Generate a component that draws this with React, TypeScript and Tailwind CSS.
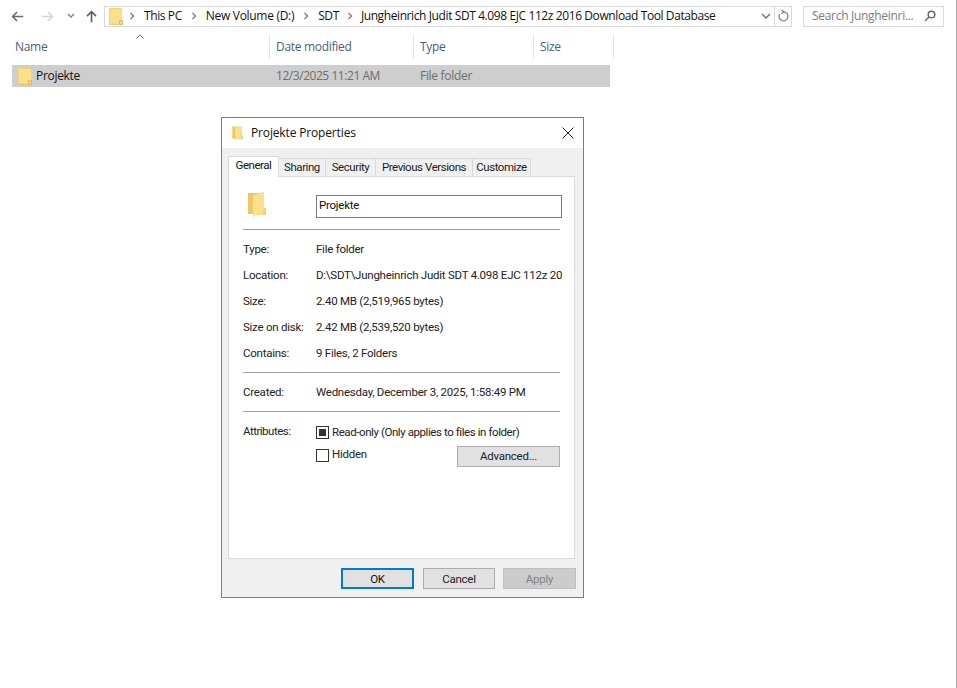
import React from "react";

function Folder({ w, h }: { w: number; h: number }) {
  return (
    <svg className="shrink-0" width={w} height={h} viewBox="0 0 14 17">
      <rect x="0" y="0" width="13" height="16.5" fill="#fbe08c" />
      <rect x="0" y="0" width="13" height="1" fill="#f5d272" />
      <rect x="0" y="0" width="0.8" height="16.5" fill="#f3cf76" />
      <path d="M10.5 16.5 V12.5 H13.5 V16.5 Z" fill="#f7d67a" stroke="#dca93c" strokeWidth="0.7" />
      <rect x="0" y="15.8" width="13" height="0.8" fill="#e7bd58" />
    </svg>
  );
}

function BigFolder({ w, h }: { w: number; h: number }) {
  return (
    <svg className="shrink-0" width={w} height={h} viewBox="0 0 18 26">
      <path d="M0 1 H16 V22 H0 Z" fill="#edc868" />
      <path d="M5 3 L16 0 V16 H18 V23 H7 L5 26 Z" fill="#fbdf8b" />
      <path d="M16 16 H18 V23 H14 Z" fill="#f5d274" />
    </svg>
  );
}

function Arrow({ d, color }: { d: string; color: string }) {
  return (
    <svg className="shrink-0" width="13" height="13" viewBox="0 0 16 16" fill="none" stroke={color} strokeWidth="2">
      <path d={d} />
    </svg>
  );
}

function Chevron({ color = "#7a7a7a" }: { color?: string }) {
  return (
    <svg className="shrink-0" width="6" height="8" viewBox="0 0 6 8" fill="none" stroke={color} strokeWidth="1.3">
      <path d="M1.5 1 L4.5 4 L1.5 7" />
    </svg>
  );
}

function Crumb({ label }: { label: string }) {
  return <span className="whitespace-nowrap">{label}</span>;
}

function Hr() {
  return <div className="h-px bg-[#a0a0a0] w-[317px]" />;
}

function Row({ k, v }: { k: string; v: string }) {
  return (
    <div className="flex items-center h-[26px]">
      <span className="w-[73px] shrink-0">{k}</span>
      <span className="whitespace-nowrap">{v}</span>
    </div>
  );
}

function Tab({ label, w, active }: { label: string; w: string; active?: boolean }) {
  return active ? (
    <div className={`${w} h-[21px] -mb-px relative z-10 bg-white border border-b-0 border-[#d9d9d9] flex items-start justify-center text-[#111] tracking-[-0.45px]`}>
      {label}
    </div>
  ) : (
    <div className={`${w} h-[18px] bg-[#f0f0f0] border border-b-0 border-l-0 border-[#d9d9d9] flex items-center justify-center pb-[2px] text-[#222] tracking-[-0.45px]`}>
      {label}
    </div>
  );
}

export default function App() {
  return (
    <div className="relative w-[957px] h-[688px] bg-white border-r border-[#a6a6a6] overflow-hidden text-[12px] leading-[16px] tracking-[-0.3px] text-[#1a1a1a] flex flex-col font-['Open_Sans','Noto_Sans',sans-serif]">
      {/* Toolbar */}
      <div className="flex items-center h-[22px] mt-[5px]">
        <div className="flex items-center w-[104px] pl-[11px]">
          <Arrow d="M15 8 H2 M7.5 2.5 L2 8 L7.5 13.5" color="#6b6b6b" />
          <div className="ml-[17px]">
            <Arrow d="M1 8 H14 M8.5 2.5 L14 8 L8.5 13.5" color="#d6d6d6" />
          </div>
          <svg className="ml-[13px] shrink-0" width="8" height="6" viewBox="0 0 8 6" fill="none" stroke="#7a7a7a" strokeWidth="1.3">
            <path d="M1 1 L4 4 L7 1" />
          </svg>
          <div className="ml-[10px]">
            <Arrow d="M8 15 V2 M2.5 7.5 L8 2 L13.5 7.5" color="#5f5f5f" />
          </div>
        </div>
        <div className="flex items-center w-[671px] h-[21px] border border-[#d9d9d9] pl-[4px] tracking-[-0.4px] text-[#111]">
          <Folder w={14} h={17} />
          <div className="ml-[6px] mr-[9px]"><Chevron /></div>
          <Crumb label="This PC" />
          <div className="mx-[9px]"><Chevron /></div>
          <span className="whitespace-nowrap tracking-[-0.3px]">New Volume (D:)</span>
          <div className="mx-[9px]"><Chevron /></div>
          <Crumb label="SDT" />
          <div className="mx-[8px]"><Chevron /></div>
          <Crumb label="Jungheinrich Judit SDT 4.098 EJC 112z 2016 Download Tool Database" />
          <svg className="ml-auto mr-[3px] shrink-0" width="10" height="7" viewBox="0 0 10 7" fill="none" stroke="#6f6f6f" strokeWidth="1.4">
            <path d="M1 1 L5 5 L9 1" />
          </svg>
        </div>
        <div className="flex items-center justify-center w-[17px] h-[21px] border border-l-0 border-[#d9d9d9]">
          <svg width="12" height="14" viewBox="0 0 12 14" fill="none" stroke="#7d7d7d" strokeWidth="1.2">
            <path d="M6.5 2.8 A4.5 4.5 0 1 1 2.6 5" />
            <path d="M4.5 0.8 L6.8 2.8 L4.5 4.8" />
          </svg>
        </div>
        <div className="ml-[11px] flex items-center w-[141px] h-[21px] border border-[#d9d9d9] pl-[8px] pr-[7px] text-[#7b7b7b]">
          <span className="whitespace-nowrap">Search Jungheinri...</span>
          <svg className="ml-auto" width="12" height="12" viewBox="0 0 12 12" fill="none" stroke="#6a6a6a" strokeWidth="1.5">
            <circle cx="7.5" cy="4.5" r="3.3" />
            <path d="M5 7 L1 11" />
          </svg>
        </div>
      </div>

      {/* Column header */}
      <div className="relative flex h-[25px] mt-[7px] items-center text-[#4c607a]">
        <svg className="absolute left-[136px] top-[0px]" width="8" height="5" viewBox="0 0 8 5" fill="none" stroke="#707070" strokeWidth="1">
          <path d="M0.5 4.5 L4 1 L7.5 4.5" />
        </svg>
        <div className="w-[270px] h-full pl-[15px] flex items-center border-r border-[#e5e5e5]">Name</div>
        <div className="w-[144px] h-full pl-[6px] flex items-center border-r border-[#e5e5e5]">Date modified</div>
        <div className="w-[120px] h-full pl-[6px] flex items-center border-r border-[#e5e5e5]">Type</div>
        <div className="w-[80px] h-full pl-[6px] flex items-center border-r border-[#e5e5e5]">Size</div>
      </div>

      {/* File row */}
      <div className="ml-[12px] mt-[6px] w-[598px] h-[22px] bg-[#cecece] flex items-center">
        <div className="w-[257px] flex items-center pl-[6px] text-[#111]">
          <Folder w={14} h={17} />
          <span className="ml-[4px]">Projekte</span>
        </div>
        <div className="w-[144px] pl-[7px] text-[#6d6d6d] tracking-[-0.45px]">12/3/2025 11:21 AM</div>
        <div className="pl-[7px] text-[#6d6d6d]">File folder</div>
      </div>

      {/* Properties dialog */}
      <div className="absolute left-[221px] top-[117px] w-[363px] h-[481px] bg-[#f0f0f0] border border-[#7d7d7d] flex flex-col text-[#222] font-['Roboto',sans-serif] text-[11.5px] tracking-[-0.25px]">
        <div className="h-[30px] bg-white flex items-center pl-[10px] pr-[9px] shrink-0">
          <BigFolder w={11} h={15} />
          <span className="ml-[8px] text-[12px] text-[#111] font-['Open_Sans',sans-serif] tracking-[-0.15px]">Projekte Properties</span>
          <svg className="ml-auto" width="12" height="12" viewBox="0 0 12 12" fill="none" stroke="#222" strokeWidth="1">
            <path d="M0.5 0.5 L11.5 11.5 M11.5 0.5 L0.5 11.5" />
          </svg>
        </div>

        <div className="flex items-end h-[28px] ml-[6px] shrink-0">
          <Tab label="General" w="w-[51px]" active />
          <Tab label="Sharing" w="w-[47px]" />
          <Tab label="Security" w="w-[50px]" />
          <Tab label="Previous Versions" w="w-[97px]" />
          <Tab label="Customize" w="w-[58px]" />
        </div>

        <div className="ml-[6px] w-[347px] h-[383px] bg-white border border-[#d9d9d9] shrink-0 pl-[14px] flex flex-col">
          <div className="flex items-start mt-[15px] h-[37px]">
            <div className="ml-[5px] w-[68px]">
              <BigFolder w={18} h={26} />
            </div>
            <div className="mt-[3px] w-[246px] h-[23px] border border-[#7a7a7a] pl-[2px] pb-[3px] flex items-center text-[#111]">Projekte</div>
          </div>
          <Hr />
          <div className="mt-[6px]">
            <Row k="Type:" v="File folder" />
            <Row k="Location:" v="D:\SDT\Jungheinrich Judit SDT 4.098 EJC 112z 20" />
            <Row k="Size:" v="2.40 MB (2,519,965 bytes)" />
            <Row k="Size on disk:" v="2.42 MB (2,539,520 bytes)" />
            <Row k="Contains:" v="9 Files, 2 Folders" />
          </div>
          <div className="mt-[6px]"><Hr /></div>
          <div className="mt-[6px]">
            <Row k="Created:" v="Wednesday, December 3, 2025, 1:58:49 PM" />
          </div>
          <div className="mt-[6px]"><Hr /></div>
          <div className="flex mt-[11px]">
            <span className="w-[73px] shrink-0 tracking-[-0.5px]">Attributes:</span>
            <div className="flex flex-col mt-[1px]">
              <div className="flex items-center h-[16px]">
                <span className="w-[13px] h-[13px] border border-[#333] flex items-center justify-center">
                  <span className="w-[7px] h-[7px] bg-[#333]" />
                </span>
                <span className="ml-[3px] whitespace-nowrap tracking-[-0.42px]">Read-only (Only applies to files in folder)</span>
              </div>
              <div className="flex items-center mt-[5px] w-[244px] h-[22px]">
                <span className="w-[13px] h-[13px] border border-[#333] -mt-[2px]" />
                <span className="ml-[3px] -mt-[4px]">Hidden</span>
                <div className="ml-auto w-[103px] h-[21px] bg-[#e1e1e1] border border-[#adadad] flex items-center justify-center">Advanced...</div>
              </div>
            </div>
          </div>
        </div>

        <div className="flex mt-[9px] ml-[119px] shrink-0">
          <div className="w-[73px] h-[21px] bg-[#e1e1e1] border-2 border-[#0078d7] flex items-center justify-center text-[#111]">OK</div>
          <div className="ml-[9px] w-[72px] h-[21px] bg-[#e1e1e1] border border-[#adadad] flex items-center justify-center">Cancel</div>
          <div className="ml-[8px] w-[73px] h-[21px] bg-[#cccccc] border border-[#bfbfbf] flex items-center justify-center text-[#838383]">Apply</div>
        </div>
      </div>
    </div>
  );
}
